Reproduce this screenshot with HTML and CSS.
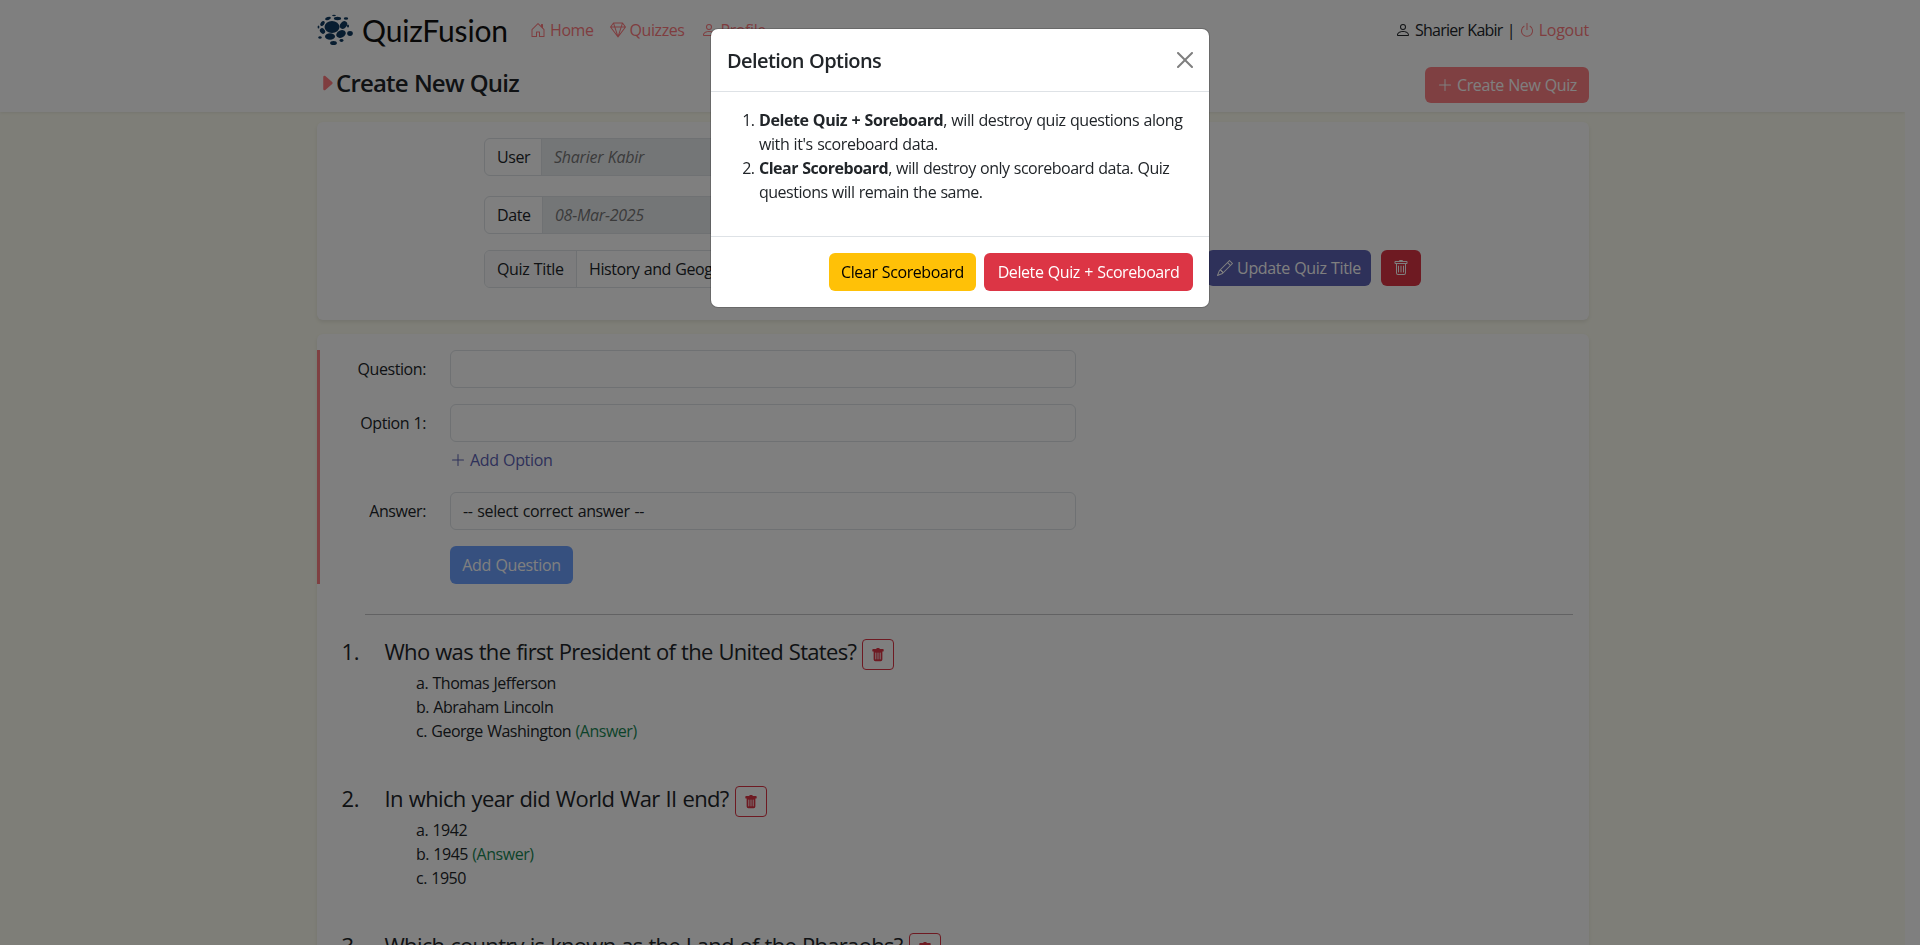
FILE: index.html
```html
<!DOCTYPE html>
<html lang="en">
<head>
<meta charset="utf-8">
<title>QuizFusion</title>
<link rel="stylesheet" href="styles.css">
</head>
<body>
<svg class="sprite" aria-hidden="true">
  <symbol id="house" viewBox="0 0 16 16"><path d="M8.354 1.146a.5.5 0 0 0-.708 0l-6 6A.5.5 0 0 0 1.500 7.500v7a.5.5 0 0 0 .5.5h4.500a.5.5 0 0 0 .5-.5v-4h2v4a.5.5 0 0 0 .5.5H14a.5.5 0 0 0 .5-.5v-7a.5.5 0 0 0-.146-.354L13 5.793V2.500a.5.5 0 0 0-.5-.5h-1a.5.5 0 0 0-.5.5v1.293zM2.500 14V7.707l5.500-5.500 5.500 5.500V14H10v-4a.5.5 0 0 0-.5-.5h-3a.5.5 0 0 0-.5.5v4z"/></symbol>
  <symbol id="gem" viewBox="0 0 16 16"><path d="M3.100.7a.5.5 0 0 1 .4-.2h9a.5.5 0 0 1 .4.2l2.976 3.974c.149.185.156.450.010.644L8.400 15.300a.5.5 0 0 1-.8 0L.1 5.300a.5.5 0 0 1 0-.6zm11.386 3.785-1.806-2.410-.776 2.413zm-3.633.004.961-2.989H4.186l.963 2.995zM5.470 5.495 8 13.366l2.532-7.876zm-1.371-.999-.780-2.422-1.818 2.425zM1.499 5.500l5.113 6.817-2.192-6.820zm7.889 6.817 5.123-6.830-2.928.002z"/></symbol>
  <symbol id="person" viewBox="0 0 16 16"><path d="M8 8a3 3 0 1 0 0-6 3 3 0 0 0 0 6m2-3a2 2 0 1 1-4 0 2 2 0 0 1 4 0m4 8c0 1-1 1-1 1H3s-1 0-1-1 1-4 6-4 6 3 6 4m-1-.004c-.001-.246-.154-.986-.832-1.664C11.516 10.680 10.289 10 8 10s-3.516.680-4.168 1.332c-.678.678-.830 1.418-.832 1.664z"/></symbol>
  <symbol id="power" viewBox="0 0 16 16"><path d="M7.500 1v7h1V1z"/><path d="M3 8.812a5 5 0 0 1 2.578-4.375l-.485-.874A6 6 0 1 0 11 3.616l-.501.865A5 5 0 1 1 3 8.812"/></symbol>
  <symbol id="plus" viewBox="0 0 16 16"><path d="M8 2a.5.5 0 0 1 .5.5v5h5a.5.5 0 0 1 0 1h-5v5a.5.5 0 0 1-1 0v-5h-5a.5.5 0 0 1 0-1h5v-5A.5.5 0 0 1 8 2"/></symbol>
  <symbol id="caret" viewBox="0 0 16 16"><path d="m12.140 8.753-5.482 4.796c-.646.566-1.658.106-1.658-.753V3.204a1 1 0 0 1 1.659-.753l5.480 4.796a1 1 0 0 1 0 1.506z"/></symbol>
  <symbol id="pencil" viewBox="0 0 16 16"><path d="M12.146.146a.5.5 0 0 1 .708 0l3 3a.5.5 0 0 1 0 .708l-10 10a.5.5 0 0 1-.168.110l-5 2a.5.5 0 0 1-.650-.650l2-5a.5.5 0 0 1 .110-.168zM11.207 2.500 13.500 4.793 14.793 3.500 12.500 1.207zm1.586 3L10.500 3.207 4 9.707V10h.5a.5.5 0 0 1 .5.5v.5h.5a.5.5 0 0 1 .5.5v.5h.293zm-9.761 5.175-.106.106-1.528 3.821 3.821-1.528.106-.106A.5.5 0 0 1 5 12.500V12h-.5a.5.5 0 0 1-.5-.5V11h-.5a.5.5 0 0 1-.468-.325"/></symbol>
  <symbol id="trash" viewBox="0 0 16 16"><path d="M5.500 5.500A.5.5 0 0 1 6 6v6a.5.5 0 0 1-1 0V6a.5.5 0 0 1 .5-.5m2.500 0a.5.5 0 0 1 .5.5v6a.5.5 0 0 1-1 0V6a.5.5 0 0 1 .5-.5m3 .5a.5.5 0 0 0-1 0v6a.5.5 0 0 0 1 0z"/><path d="M14.500 3a1 1 0 0 1-1 1H13v9a2 2 0 0 1-2 2H5a2 2 0 0 1-2-2V4h-.5a1 1 0 0 1-1-1V2a1 1 0 0 1 1-1H6a1 1 0 0 1 1-1h2a1 1 0 0 1 1 1h3.500a1 1 0 0 1 1 1zM4.118 4 4 4.059V13a1 1 0 0 0 1 1h6a1 1 0 0 0 1-1V4.059L11.882 4zM2.500 3h11V2h-11z"/></symbol>
  <symbol id="trash-fill" viewBox="0 0 16 16"><path d="M2.500 1a1 1 0 0 0-1 1v1a1 1 0 0 0 1 1H3v9a2 2 0 0 0 2 2h6a2 2 0 0 0 2-2V4h.5a1 1 0 0 0 1-1V2a1 1 0 0 0-1-1H10a1 1 0 0 0-1-1H7a1 1 0 0 0-1 1zm3 4a.5.5 0 0 1 .5.5v7a.5.5 0 0 1-1 0v-7a.5.5 0 0 1 .5-.5M8 5a.5.5 0 0 1 .5.5v7a.5.5 0 0 1-1 0v-7A.5.5 0 0 1 8 5m3 .5v7a.5.5 0 0 1-1 0v-7a.5.5 0 0 1 1 0"/></symbol>
  <symbol id="close" viewBox="0 0 16 16"><path d="M.293.293a1 1 0 0 1 1.414 0L8 6.586 14.293.293a1 1 0 1 1 1.414 1.414L9.414 8l6.293 6.293a1 1 0 0 1-1.414 1.414L8 9.414l-6.293 6.293a1 1 0 0 1-1.414-1.414L6.586 8 .293 1.707a1 1 0 0 1 0-1.414z"/></symbol>
</svg>

<div class="page">
  <header class="header">
    <div class="wrap">
      <div class="topbar">
        <a class="brand">
          <svg class="mark" viewBox="0 0 36 32">
            <ellipse cx="15" cy="13" rx="7.500" ry="6"/>
            <ellipse cx="26.500" cy="11" rx="4.200" ry="3.200" transform="rotate(-50 26.500 11)"/>
            <ellipse cx="24" cy="20" rx="5" ry="3.600" transform="rotate(-25 24 20)"/>
            <ellipse cx="13" cy="22.500" rx="5" ry="3.200"/>
            <ellipse cx="5.500" cy="17" rx="3" ry="2.300" transform="rotate(50 5.500 17)"/>
            <ellipse cx="5.500" cy="9.500" rx="2.800" ry="1.800" transform="rotate(-50 5.500 9.500)"/>
            <ellipse cx="20.500" cy="4.500" rx="3.600" ry="1.700"/>
            <ellipse cx="11" cy="4.500" rx="3" ry="1.500" transform="rotate(-20 11 4.500)"/>
            <ellipse cx="33" cy="19.500" rx="2.800" ry="2.400"/>
            <ellipse cx="16.500" cy="29" rx="3.400" ry="2"/>
            <ellipse cx="24.500" cy="26.500" rx="2" ry="1.400"/>
            <ellipse cx="29" cy="4.500" rx="2.200" ry="1.300"/>
            <ellipse cx="31" cy="12" rx="1" ry="1.500"/>
            <ellipse cx="3" cy="23.500" rx="1.700" ry="1.300"/>
            <ellipse cx="1.500" cy="13" rx=".9" ry="1.500"/>
            <ellipse cx="17" cy="1.500" rx="1.900" ry=".8"/>
          </svg>
          <span class="wordmark">QuizFusion</span>
        </a>
        <nav class="nav">
          <a class="link"><svg class="ico"><use href="#house"/></svg><span>Home</span></a>
          <a class="link"><svg class="ico"><use href="#gem"/></svg><span>Quizzes</span></a>
          <a class="link"><svg class="ico"><use href="#person"/></svg><span>Profile</span></a>
        </nav>
        <div class="account">
          <svg class="ico"><use href="#person"/></svg><span class="who">Sharier Kabir |</span>
          <a class="link"><svg class="ico"><use href="#power"/></svg><span>Logout</span></a>
        </div>
      </div>
      <div class="titlebar">
        <h1 class="title"><svg class="caret"><use href="#caret"/></svg><span>Create New Quiz</span></h1>
        <button class="btn coral"><svg class="ico"><use href="#plus"/></svg><span>Create New Quiz</span></button>
      </div>
    </div>
  </header>

  <main class="wrap">
    <section class="card meta">
      <div class="group user"><label>User</label><div class="value off">Sharier Kabir</div></div>
      <div class="group date"><label>Date</label><div class="value off">08-Mar-2025</div></div>
      <div class="row">
        <div class="group quiz"><label>Quiz Title</label><div class="value">History and Geography</div></div>
        <button class="btn indigo"><svg class="ico"><use href="#pencil"/></svg><span>Update Quiz Title</span></button>
        <button class="btn red"><svg class="ico"><use href="#trash"/></svg></button>
      </div>
    </section>

    <section class="card editor">
      <div class="form">
        <label>Question:</label><div class="input"></div>
        <label>Option 1:</label><div class="input"></div>
        <a class="add"><svg class="ico"><use href="#plus"/></svg><span>Add Option</span></a>
        <label>Answer:</label><div class="input select">-- select correct answer --</div>
        <button class="btn blue"><span>Add Question</span></button>
      </div>
      <hr class="rule">
      <div class="question">
        <div class="num">1.</div>
        <div class="body">
          <div class="ask"><span>Who was the first President of the United States?</span><button class="del"><svg><use href="#trash-fill"/></svg></button></div>
          <div class="opt">a. Thomas Jefferson</div>
          <div class="opt">b. Abraham Lincoln</div>
          <div class="opt">c. George Washington <span class="ok">(Answer)</span></div>
        </div>
      </div>
      <div class="question">
        <div class="num">2.</div>
        <div class="body">
          <div class="ask loose"><span>In which year did World War II end?</span><button class="del"><svg><use href="#trash-fill"/></svg></button></div>
          <div class="opt">a. 1942</div>
          <div class="opt">b. 1945 <span class="ok">(Answer)</span></div>
          <div class="opt">c. 1950</div>
        </div>
      </div>
      <div class="question">
        <div class="num">3.</div>
        <div class="body">
          <div class="ask"><span>Which country is known as the Land of the Pharaohs?</span><button class="del"><svg><use href="#trash-fill"/></svg></button></div>
        </div>
      </div>
    </section>
  </main>
</div>

<div class="backdrop">
  <div class="modal">
    <div class="modal-head"><h2>Deletion Options</h2><svg class="close"><use href="#close"/></svg></div>
    <div class="modal-body">
      <ol>
        <li><span><b>Delete Quiz + Soreboard</b>, will destroy quiz questions along</span><br><span>with it's scoreboard data.</span></li>
        <li><span class="tight"><b>Clear Scoreboard</b>, will destroy only scoreboard data. Quiz</span><br><span class="tight">questions will remain the same.</span></li>
      </ol>
    </div>
    <div class="modal-foot">
      <button class="btn warn"><span>Clear Scoreboard</span></button>
      <button class="btn danger"><span>Delete Quiz + Scoreboard</span></button>
    </div>
  </div>
</div>
</body>
</html>
```
FILE: styles.css
```css
* { box-sizing: border-box; }
html, body { height: 100%; }
body {
  margin: 0;
  overflow: hidden;
  background: #fff;
  color: #212529;
  font: 16px/24px "Open Sans", "Noto Sans", sans-serif;
  letter-spacing: -0.42px;
  word-spacing: 0.6px;
}
.sprite { position: absolute; width: 0; height: 0; }
svg { fill: currentColor; display: block; flex: none; }
span, label, a { white-space: nowrap; }
.page { width: 1905px; height: 945px; overflow: hidden; background: #fdfdf0; }
.wrap { width: 1272px; margin-left: 317px; }
.ico { width: 16px; height: 16px; }

.header { height: 112px; background: #fff; box-shadow: 0 1px 3px rgba(0, 0, 0, .08); }
.topbar { display: flex; align-items: center; height: 60px; }
.brand { display: flex; align-items: center; width: 213px; }
.mark { width: 36px; height: 32px; fill: #113a60; }
.wordmark { margin-left: 9px; font: 30px/40px Lato, sans-serif; letter-spacing: -.15px; color: #111; }
.nav { display: flex; gap: 16px; }
.link { display: flex; align-items: center; gap: 4px; color: #ff7b7f; }
.account { display: flex; align-items: center; gap: 4px; margin-left: auto; }
.who { letter-spacing: -.75px; }
.account .link { letter-spacing: -.25px; }
.titlebar { display: flex; justify-content: space-between; padding-top: 7px; }
.title { display: flex; align-items: center; height: 31px; margin: 0; font-size: 24px; font-weight: 600; letter-spacing: -.8px; }
.caret { width: 20px; height: 20px; margin-right: -1px; color: #ff7b7f; }

.btn {
  display: flex; align-items: center; justify-content: center; gap: 4px;
  height: 38px; padding: 0; border: 0; border-radius: 6px;
  color: #fff; font: inherit; letter-spacing: inherit; word-spacing: inherit;
}
.coral { width: 164px; height: 36px; letter-spacing: -.4px; background: #ff8185; }
.indigo { width: 164px; height: 36px; letter-spacing: -.35px; background: #5c62b4; }
.red { width: 40px; height: 36px; margin-left: 10px; background: #dc3545; }
.blue { width: 123px; letter-spacing: -.35px; background: #6ca0ff; grid-column: 2; }
.warn { width: 147px; background: #ffc107; color: #000; }
.danger { width: 209px; background: #dc3545; }

.card { background: #fff; border-radius: 6px; box-shadow: 0 2px 4px rgba(0, 0, 0, .09); }
.meta { height: 198px; margin-top: 10px; padding: 16px 0 0 167px; }
.group { display: flex; height: 38px; border: 1px solid #dee2e6; border-radius: 6px; overflow: hidden; }
.group label { padding: 6px 0 6px 12px; border-right: 1px solid #dee2e6; }
.value { flex: 1; padding: 6px 12px; white-space: nowrap; }
.off { background: #e9ecef; font-style: italic; letter-spacing: -.25px; color: #777; }
.user, .date { width: 500px; }
.user label { width: 57px; }
.date { margin-top: 20px; }
.date label { width: 58px; }
.row { display: flex; margin-top: 16px; }
.quiz { width: 724px; }
.quiz label { width: 92px; letter-spacing: -.35px; background: #f8f9fa; }
.row .indigo { margin-left: -1px; }

.editor { height: 700px; margin-top: 14px; padding-top: 16px; }
.form { display: grid; grid-template-columns: 106px 626px; column-gap: 24px; border-left: 3px solid #ff8185; height: 234px; align-content: start; }
.form label { text-align: right; padding-top: 7px; }
.input { height: 38px; margin-bottom: 16px; padding: 6px 12px; border: 1px solid #dee2e6; border-radius: 6px; white-space: nowrap; }
.select { letter-spacing: -.38px; word-spacing: 1px; }
.add { grid-column: 2; display: flex; align-items: center; gap: 4px; margin: -10px 0 20px; height: 24px; letter-spacing: -.35px; color: #5c62b4; }
.rule { height: 1px; margin: 30px 16px 0 48px; border: 0; background: #c4c5c6; }
.question { display: flex; height: 147px; padding: 24px 0 0 24.5px; }
.num { width: 43px; margin-top: -2px; font-size: 22px; line-height: 28px; letter-spacing: -.4px; }
.ask { display: flex; height: 32px; gap: 6px; font-size: 22px; line-height: 28px; letter-spacing: -.7px; word-spacing: .8px; }
.loose { letter-spacing: -.64px; }
.ask span { margin-top: -2px; }
.del { display: flex; align-items: center; justify-content: center; width: 32px; height: 31px; padding: 0; border: 1px solid #dc3545; border-radius: 4px; background: none; color: #dc3545; }
.del svg { width: 14px; height: 14px; }
.opt { padding-left: 31.5px; letter-spacing: -.47px; }
.ok { color: #198754; }

.backdrop { position: fixed; inset: 0; background: rgba(0, 0, 0, .5); }
.modal { width: 498px; height: 278px; margin: 29px 0 0 711px; background: #fff; border-radius: 7px; box-shadow: 0 0 0 1px rgba(0, 0, 0, .175); }
.modal-head { display: flex; align-items: center; justify-content: space-between; height: 63px; padding: 0 16px; border-bottom: 1px solid #dee2e6; }
.modal-head h2 { margin: 2px 0 0; font-size: 20px; font-weight: 600; letter-spacing: -.6px; }
.close { width: 16px; height: 16px; color: #7f7f7f; }
.modal-body { height: 145px; padding: 16px 16px 0; border-bottom: 1px solid #dee2e6; }
.modal-body ol { margin: 0; padding-left: 32px; }
.tight { letter-spacing: -.49px; }
.modal-foot { display: flex; justify-content: flex-end; gap: 8px; padding: 16px; }
```
